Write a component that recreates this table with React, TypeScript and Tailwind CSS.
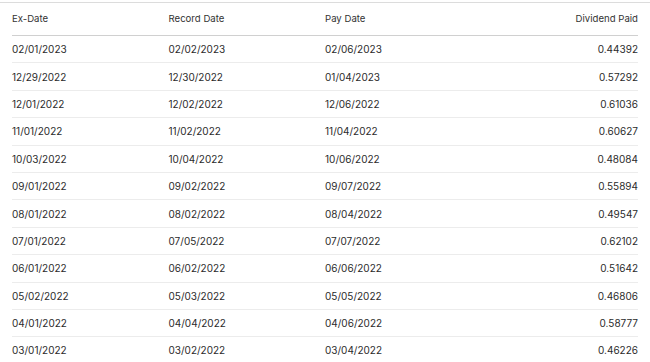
const ROWS: [string, string, string, string][] = [
  ["02/01/2023", "02/02/2023", "02/06/2023", "0.44392"],
  ["12/29/2022", "12/30/2022", "01/04/2023", "0.57292"],
  ["12/01/2022", "12/02/2022", "12/06/2022", "0.61036"],
  ["11/01/2022", "11/02/2022", "11/04/2022", "0.60627"],
  ["10/03/2022", "10/04/2022", "10/06/2022", "0.48084"],
  ["09/01/2022", "09/02/2022", "09/07/2022", "0.55894"],
  ["08/01/2022", "08/02/2022", "08/04/2022", "0.49547"],
  ["07/01/2022", "07/05/2022", "07/07/2022", "0.62102"],
  ["06/01/2022", "06/02/2022", "06/06/2022", "0.51642"],
  ["05/02/2022", "05/03/2022", "05/05/2022", "0.46806"],
  ["04/01/2022", "04/04/2022", "04/06/2022", "0.58777"],
  ["03/01/2022", "03/02/2022", "03/04/2022", "0.46226"],
];

export default function App() {
  return (
    <div
      className="h-[362px] w-[650px] overflow-hidden bg-white text-[#2b2b2b]"
      style={{ fontFamily: "Inter, 'Liberation Sans', sans-serif" }}
    >
      <div className="mt-[2px] border-t border-[#dcdcdc] px-3">
        {/* Header */}
        <div className="grid h-[33px] grid-cols-4 items-center border-b border-[#d0d0d0] text-[9.6px] text-[#333]">
          <div>Ex-Date</div>
          <div>Record Date</div>
          <div>Pay Date</div>
          <div className="text-right">Dividend Paid</div>
        </div>

        {ROWS.map((row) => (
          <div
            key={row[0]}
            className="grid h-[27.4px] grid-cols-4 items-center border-b border-[#ececec] pt-[1px] text-[10px]"
          >
            <div>{row[0]}</div>
            <div>{row[1]}</div>
            <div>{row[2]}</div>
            <div className="text-right">{row[3]}</div>
          </div>
        ))}
      </div>
    </div>
  );
}
